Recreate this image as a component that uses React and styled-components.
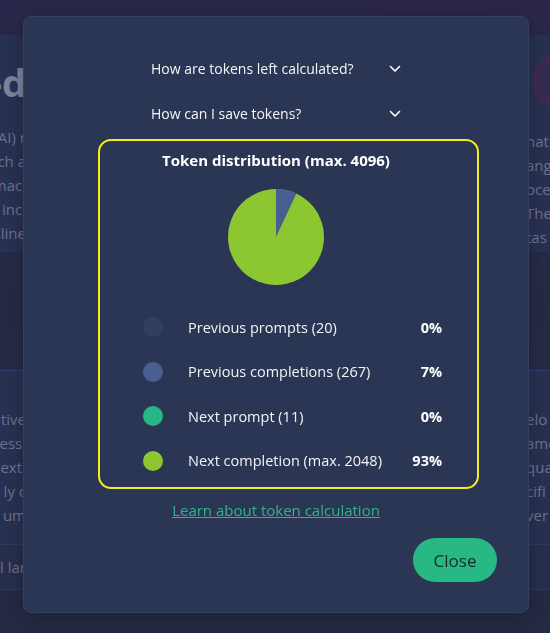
import React from 'react'
import styled, { createGlobalStyle } from 'styled-components'

const GlobalStyle = createGlobalStyle`
  * { box-sizing: border-box; }
  html, body {
    margin: 0;
    padding: 0;
    background: #252a45;
    overflow: hidden;
  }
  body {
    font-family: "Open Sans", "Noto Sans", sans-serif;
  }
`

const segments = [
  { label: 'Previous prompts (20)', pct: '0%', color: '#323f60' },
  { label: 'Previous completions (267)', pct: '7%', color: '#4a5e8f' },
  { label: 'Next prompt (11)', pct: '0%', color: '#27b686' },
  { label: 'Next completion (max. 2048)', pct: '93%', color: '#8cc732' },
]

// page behind the dialog
const topLines = [['(AI) r', 'hat'], ['ch a', 'ang'], ['macl', 'oces'], ['incl', 'The'], ['line', 'tas']]
const lowLines = [['tive', 'elo'], ['essi', 'ame'], ['ext.', 'qua'], ['ly c', 'cifi'], ['um', 'ver']]

const Chevron = () => (
  <svg width="12" height="8" viewBox="0 0 12 8">
    <polyline points="1.5,1.5 6,6 10.5,1.5" fill="none" stroke="#ffffff" strokeWidth="1.6" strokeLinecap="round" strokeLinejoin="round" />
  </svg>
)

const Pie = () => {
  const r = 48
  const a = (0.07 * 2 * Math.PI)
  const x = 50 + r * Math.sin(a)
  const y = 50 - r * Math.cos(a)
  return (
    <svg width="100" height="100" viewBox="0 0 100 100">
      <circle cx="50" cy="50" r={r} fill="#8cc732" />
      <path d={`M50,50 L50,${50 - r} A${r},${r} 0 0 1 ${x},${y} Z`} fill="#4a5e8f" />
    </svg>
  )
}

const App = () => {
  return (
    <>
      <GlobalStyle />
      <Page>
        <Header />
        <Section>
          <SideCol side='left'>
            <BigTitle>Text-d</BigTitle>
            {topLines.map((l, i) => <BgLine key={i}>{l[0]}</BgLine>)}
          </SideCol>
          <SideCol side='right'>
            <Avatar />
            {topLines.map((l, i) => <BgLine key={i}>{l[1]}</BgLine>)}
          </SideCol>
        </Section>
        <Gap />
        <Section low>
          <SideCol side='left'>
            {lowLines.map((l, i) => <BgLine key={i}>{l[0]}</BgLine>)}
          </SideCol>
          <SideCol side='right'>
            {lowLines.map((l, i) => <BgLine key={i}>{l[1]}</BgLine>)}
          </SideCol>
        </Section>
        <InfoRow>
          <SideCol side='left'>
            <BgLine>Small lar</BgLine>
          </SideCol>
        </InfoRow>
      </Page>

      <Dialog>
        <Accordion>
          <AccordionItem>
            <span>How are tokens left calculated?</span>
            <Chevron />
          </AccordionItem>
          <AccordionItem>
            <span>How can I save tokens?</span>
            <Chevron />
          </AccordionItem>
        </Accordion>

        <DistBox>
          <Title>Token distribution (max. 4096)</Title>
          <PieWrap><Pie /></PieWrap>
          <Legend>
            {segments.map(s => (
              <LegendRow key={s.label}>
                <Dot color={s.color} />
                <Label>{s.label}</Label>
                <Pct>{s.pct}</Pct>
              </LegendRow>
            ))}
          </Legend>
        </DistBox>

        <LearnLink href='#'>Learn about token calculation</LearnLink>

        <Footer>
          <CloseButton>Close</CloseButton>
        </Footer>
      </Dialog>
    </>
  )
}

const Page = styled.div`
height: 633px;
display: flex;
flex-direction: column;
background: #242a44;
`

const Header = styled.div`
height: 35px;
background: linear-gradient(90deg, #28284a, #2b2748);
`

const Section = styled.div`
height: ${p => p.low ? '174px' : '217px'};
display: flex;
justify-content: space-between;
background: #293152;
border-top: ${p => p.low ? '1px solid #2f3f7a' : 'none'};
padding-top: ${p => p.low ? '36px' : '24px'};
`

const Gap = styled.div`
height: 118px;
background: linear-gradient(180deg, #252b46, #262a45);
`

const InfoRow = styled.div`
height: 46px;
display: flex;
align-items: center;
background: #282f4e;
border-top: 1px solid #313a5a;
border-bottom: 1px solid #313a5a;
`

const SideCol = styled.div`
width: ${p => p.side === 'left' ? '26px' : '24px'};
display: flex;
flex-direction: column;
align-items: ${p => p.side === 'left' ? 'flex-end' : 'flex-start'};
white-space: nowrap;
`

const BigTitle = styled.div`
font-size: 38px;
font-weight: 700;
color: #7c839e;
line-height: 46px;
margin-bottom: 20px;
`

const Avatar = styled.div`
width: 52px;
height: 52px;
margin: -4px 0 22px 6px;
border-radius: 50%;
background: radial-gradient(circle, #2f2d50 35%, #3e2a4e 65%, #2c3052 100%);
`

const BgLine = styled.div`
font-size: 15px;
line-height: 24px;
color: #6b7290;
`

const Dialog = styled.div`
position: fixed;
top: 16px;
left: 23px;
width: 506px;
height: 597px;
background: #2b3655;
border: 1px solid #33405f;
border-radius: 8px;
box-shadow: 0 4px 20px rgba(0, 0, 0, 0.25);
display: flex;
flex-direction: column;
align-items: center;
padding-top: 29px;
color: #ffffff;
`

const Accordion = styled.div`
width: 250px;
display: flex;
flex-direction: column;
`

const AccordionItem = styled.div`
height: 45px;
display: flex;
align-items: center;
justify-content: space-between;
font-size: 14px;
color: #f4f5f8;
cursor: pointer;
`

const DistBox = styled.div`
width: 381px;
margin: 3px 0 0 25px;
padding: 9px 45px 4px 20px;
border: 2px solid #f2ee1d;
border-radius: 13px;
display: flex;
flex-direction: column;
align-items: center;
`

const Title = styled.div`
font-size: 15px;
font-weight: 700;
line-height: 20px;
`

const PieWrap = styled.div`
margin-top: 17px;
line-height: 0;
`

const Legend = styled.div`
width: 299px;
align-self: flex-start;
margin: 18px 0 0 23px;
display: flex;
flex-direction: column;
`

const LegendRow = styled.div`
height: 44.5px;
display: grid;
grid-template-columns: 20px 1fr auto;
align-items: center;
font-size: 14.5px;
white-space: nowrap;
`

const Dot = styled.span`
width: 20px;
height: 20px;
border-radius: 50%;
background: ${p => p.color};
`

const Label = styled.span`
padding-left: 25px;
color: #f2f3f6;
`

const Pct = styled.span`
padding-left: 8px;
font-weight: 700;
text-align: right;
`

const LearnLink = styled.a`
margin-top: 11px;
font-size: 15px;
color: #2fb586;
text-decoration: underline;
line-height: 20px;
`

const Footer = styled.div`
width: 100%;
display: flex;
justify-content: flex-end;
padding-right: 31px;
margin-top: 18px;
`

const CloseButton = styled.button`
width: 84px;
height: 44px;
border: none;
border-radius: 22px;
background: #27b884;
color: #152a2b;
font-family: "Open Sans", "Noto Sans", sans-serif;
font-size: 17px;
cursor: pointer;
`

export default App
